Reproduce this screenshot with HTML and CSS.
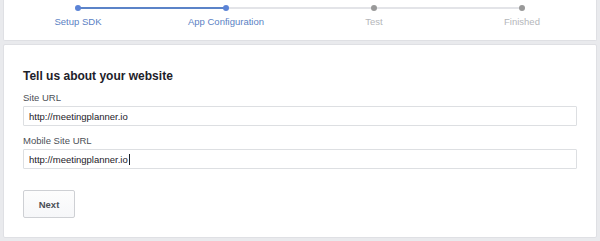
FILE: index.html
```html
<!DOCTYPE html>
<html lang="en">
<head>
  <meta charset="UTF-8">
  <meta name="viewport" content="width=device-width, initial-scale=1.0">
  <title>App Setup</title>
  <link rel="stylesheet" href="styles.css">
</head>
<body>
  <div class="page">
    <div class="card steps-card">
      <ol class="stepper">
        <li class="step done"><span class="dot"></span><span class="step-label">Setup SDK</span></li>
        <li class="step current"><span class="dot"></span><span class="step-label">App Configuration</span></li>
        <li class="step"><span class="dot"></span><span class="step-label">Test</span></li>
        <li class="step"><span class="dot"></span><span class="step-label">Finished</span></li>
      </ol>
    </div>

    <div class="card form-card">
      <h2 class="form-title">Tell us about your website</h2>
      <div class="field">
        <label class="field-label">Site URL</label>
        <div class="text-input">http://meetingplanner.io</div>
      </div>
      <div class="field">
        <label class="field-label">Mobile Site URL</label>
        <div class="text-input">http://meetingplanner.io<span class="caret"></span></div>
      </div>
      <button class="btn-next">Next</button>
    </div>
  </div>
</body>
</html>
```

FILE: styles.css
```css
* {
  box-sizing: border-box;
}

body {
  margin: 0;
  background-color: #e9eaed;
  font-family: "Liberation Sans", Arial, sans-serif;
  color: #1d2129;
}

.page {
  padding: 0 3px;
}

.card {
  background-color: #fff;
  border: 1px solid #dfe0e4;
  border-radius: 2px;
}

.steps-card {
  height: 41px;
  border-top: none;
  border-radius: 0 0 2px 2px;
}

.stepper {
  list-style: none;
  margin: 0;
  padding: 0;
  display: flex;
}

.step {
  flex: 1;
  position: relative;
  display: flex;
  flex-direction: column;
  align-items: center;
  padding-top: 5px;
}

/* connector line to the next step */
.step:not(:last-child)::after {
  content: "";
  position: absolute;
  top: 7px;
  left: 50%;
  width: 100%;
  height: 2px;
  background-color: #e3e4e8;
}

.step.done::after {
  background-color: #5b83c8 !important;
}

.dot {
  width: 6px;
  height: 6px;
  border-radius: 50%;
  background-color: #999;
  position: relative;
  z-index: 1;
}

.step.done .dot,
.step.current .dot {
  background-color: #5b83d6;
}

.step-label {
  margin-top: 5px;
  font-size: 9.5px;
  color: #b4b6ba;
}

.step.done .step-label,
.step.current .step-label {
  color: #5b7fc4;
}

.form-card {
  margin-top: 3px;
  height: 194px;
  padding: 24px 19px 0;
}

.form-title {
  margin: 0 0 9px;
  font-size: 12px;
  font-weight: bold;
  color: #1d2129;
}

.field {
  margin-bottom: 9px;
}

.field-label {
  display: block;
  font-size: 9.5px;
  color: #4b4f56;
  margin-bottom: 3px;
}

.text-input {
  height: 20px;
  border: 1px solid #dddfe2;
  border-radius: 1px;
  padding: 3px 5px;
  font-size: 9.5px;
  line-height: 13px;
  color: #1d2129;
  display: flex;
  align-items: center;
}

.caret {
  display: inline-block;
  width: 1px;
  height: 11px;
  margin-left: 1px;
  background-color: #1d2129;
}

.btn-next {
  margin-top: 12px;
  width: 52px;
  height: 28px;
  background: linear-gradient(to bottom, #fdfdfd, #f6f7f9);
  border: 1px solid #ced0d4;
  border-radius: 2px;
  font-family: "Liberation Sans", Arial, sans-serif;
  font-size: 9.5px;
  font-weight: bold;
  color: #4b4f56;
  cursor: pointer;
}
```
